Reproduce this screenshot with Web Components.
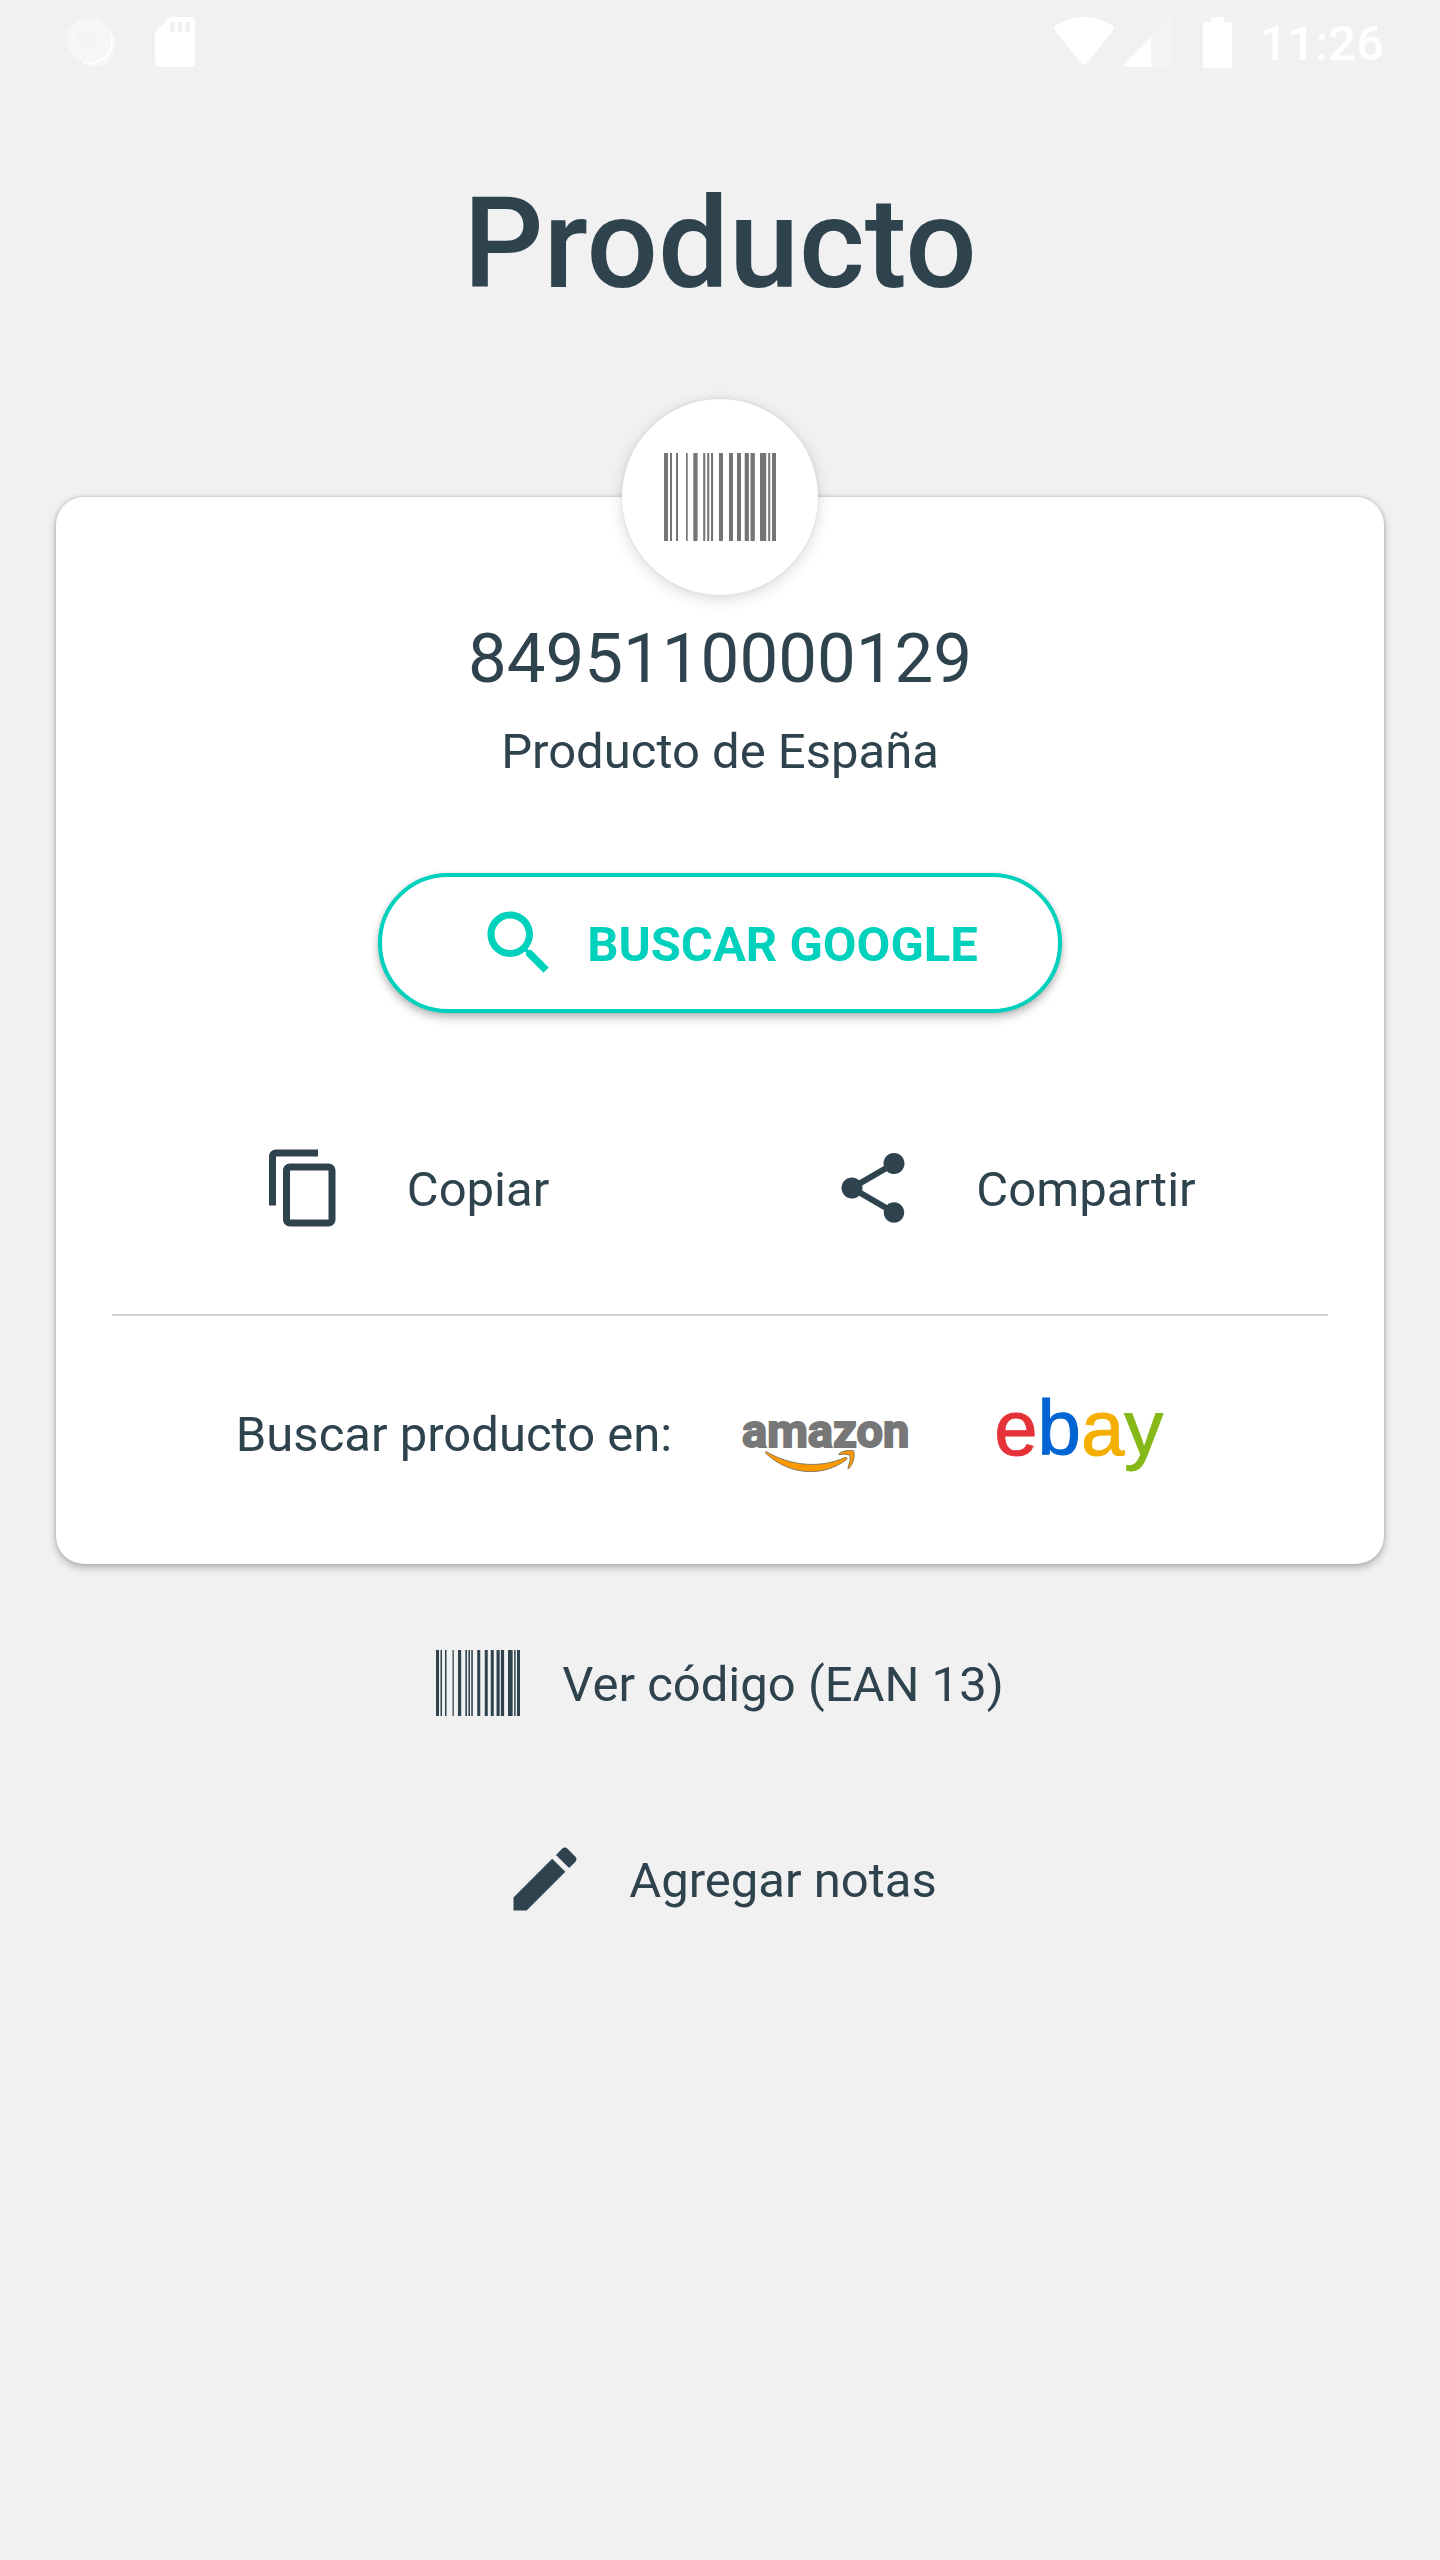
<!DOCTYPE html>
<html lang="es">
<head>
<meta charset="utf-8">
<meta name="viewport" content="width=device-width, initial-scale=1">
<title>Producto</title>
<style>
  html { background: #f1f1f1; }
  body {
    margin: 0;
    min-height: 100vh;
    --ink: #2f434e;
    --accent: #00d1bc;
    --icon: 84px;
    color: var(--ink);
    font: 400 49px/58px Roboto, "Noto Sans", sans-serif;
  }
</style>
</head>
<body>
<product-screen></product-screen>

<script>
const define = (name, html) => customElements.define(name, class extends HTMLElement {
  constructor() {
    super();
    this.attachShadow({ mode: "open" }).innerHTML = html;
  }
});

/* Android status bar: notifications on the left, system state on the right */
define("status-bar", `
<style>
  :host { display: flex; align-items: center; justify-content: space-between; height: 84px; padding: 0 56px 0 66px; color: #fff; }
  div { display: flex; align-items: center; }
  .left { gap: 39px; }
  svg { display: block; fill: #fff; }
  .signal { margin-left: 10px; }
  .battery { margin-left: 32px; }
  time { margin-left: 28px; padding-top: 4px; font-weight: 500; }
</style>
<div class="left">
  <svg width="50" height="50" viewBox="0 0 50 50" aria-hidden="true">
    <circle cx="28" cy="28" r="22" fill="#f7f7f7"/>
    <circle cx="25" cy="25" r="22"/>
    <circle cx="22.500" cy="22.500" r="22.500" fill="#f5f5f5"/>
    <circle cx="22.500" cy="22.500" r="17.500" fill="none" stroke="#f9f9f9" stroke-width="6" stroke-dasharray="2.500 3"/>
  </svg>
  <svg width="40" height="50" viewBox="0 0 40 50" aria-hidden="true">
    <path fill-rule="evenodd" d="M15 0H35.500A4.500 4.500 0 0 1 40 4.500V45.500A4.500 4.500 0 0 1 35.500 50H4.500A4.500 4.500 0 0 1 0 45.500V15ZM15 5V15H20V5ZM22.500 5V15H27.500V5ZM30 5V15H35V5Z"/>
  </svg>
</div>
<div>
  <svg width="60" height="50" viewBox="0 0 60 50" aria-hidden="true">
    <path d="M1.300 9.200C18 -3 42 -3 58.700 9.200Q60.800 11 59.300 13.500L32.500 46.500Q30 49.500 27.500 46.500L.700 13.500Q-.800 11 1.300 9.200Z"/>
  </svg>
  <svg class="signal" width="47" height="50" viewBox="0 0 47 50" aria-hidden="true">
    <path fill="#f5f5f5" d="M27 20.500 43.500 4Q47 1 47 5V47Q47 50 44 50H27Z"/>
    <path d="M27 20V50H3Q-1 49.500 .800 46.200Z"/>
  </svg>
  <svg class="battery" width="29" height="51" viewBox="0 0 29 51" aria-hidden="true">
    <path d="M8 0H21V5H27Q29 5 29 7V49Q29 51 27 51H2Q0 51 0 49V7Q0 5 2 5H8Z"/>
  </svg>
  <time>11:26</time>
</div>`);

/* Barcode glyph, coloured by currentColor */
define("bar-code", `
<style>
  :host { display: block; flex: none; width: var(--icon); }
  svg { display: block; width: 100%; height: auto; fill: currentColor; }
</style>
<svg viewBox="0 0 112 88" aria-hidden="true">
  <path d="M0 0h4v88H0zM6 0h2v88H6zM12 0h2v88h-2zM22 0h1.700v88H22zM29.300 0h4.300v88h-4.300zM39.200 0h2.100v88h-2.100zM43.200 0h2.100v88h-2.100zM47 0h2.100v88H47zM55 0h4v88h-4zM65 0h4v88h-4zM73 0h4v88h-4zM80.700 0h4.200v88h-4.200zM86.500 0h4.300v88h-4.300zM96 0h6.200v88H96zM104.200 0h2v88h-2zM108 0h4v88h-4z"/>
</svg>`);

/* Material icon: the path is chosen by the name attribute */
const ICONS = {
  search: "M15.500 14h-.79l-.28-.27C15.410 12.590 16 11.110 16 9.500 16 5.910 13.090 3 9.500 3S3 5.910 3 9.500 5.910 16 9.500 16c1.610 0 3.090-.59 4.230-1.570l.27.28v.79l5 4.990L20.490 19l-4.990-5zm-6 0C7.010 14 5 11.990 5 9.500S7.010 5 9.500 5 14 7.010 14 9.500 11.990 14 9.500 14z",
  copy: "M16 1H4c-1.100 0-2 .9-2 2v14h2V3h12V1zm3 4H8c-1.100 0-2 .9-2 2v14c0 1.100.9 2 2 2h11c1.100 0 2-.9 2-2V7c0-1.100-.9-2-2-2zm0 16H8V7h11v14z",
  share: "M18 16.080c-.76 0-1.440.3-1.960.77L8.910 12.700c.05-.23.09-.46.09-.7s-.04-.47-.09-.7l7.050-4.110c.54.5 1.250.81 2.040.81 1.660 0 3-1.340 3-3s-1.340-3-3-3-3 1.340-3 3c0 .24.040.47.090.7L8.040 9.810C7.500 9.310 6.790 9 6 9c-1.660 0-3 1.340-3 3s1.340 3 3 3c.79 0 1.500-.31 2.040-.81l7.120 4.160c-.05.21-.08.43-.08.65 0 1.610 1.310 2.920 2.920 2.920s2.920-1.310 2.920-2.920-1.310-2.920-2.920-2.920z",
  edit: "M3 17.250V21h3.750L17.810 9.940l-3.750-3.750L3 17.250zM20.710 7.040c.39-.39.39-1.020 0-1.410l-2.340-2.340c-.39-.39-1.020-.39-1.410 0l-1.830 1.830 3.750 3.750 1.830-1.830z"
};
customElements.define("md-icon", class extends HTMLElement {
  constructor() {
    super();
    this.attachShadow({ mode: "open" });
  }
  connectedCallback() {
    this.shadowRoot.innerHTML = `
<style>
  :host { display: block; flex: none; width: var(--icon); height: var(--icon); }
  svg { display: block; width: 100%; height: 100%; fill: currentColor; }
</style>
<svg viewBox="0 0 24 24" aria-hidden="true"><path d="${ICONS[this.getAttribute("name")]}"/></svg>`;
  }
});

/* Flat button with a leading icon */
define("icon-action", `
<style>
  :host { display: block; --gap: 42px; }
  button { display: flex; align-items: center; gap: var(--gap); min-height: 88px; margin: 0; padding: 0; border: 0; background: none; color: inherit; font: inherit; cursor: pointer; }
  ::slotted([slot=icon]) { margin-bottom: 4px; }
</style>
<button type="button"><slot name="icon"></slot><span><slot></slot></span></button>`);

/* Outlined pill button */
define("pill-button", `
<style>
  :host { display: block; }
  button { display: flex; align-items: center; gap: 26px; box-sizing: border-box; height: 140px; margin: 0; padding: 4px 80px 0 95px; border: 4px solid var(--accent); border-radius: 70px; background: #fff; color: var(--accent); font: inherit; font-weight: 700; box-shadow: 0 5px 8px rgba(0,0,0,.25), 0 0 4px rgba(0,0,0,.1); cursor: pointer; }
  ::slotted([slot=icon]) { margin-bottom: 4px; }
</style>
<button type="button"><slot name="icon"></slot><span><slot></slot></span></button>`);

define("amazon-link", `
<style>
  :host { display: block; }
  svg { display: block; width: 168px; height: 72px; overflow: visible; }
  text { font: 700 47px Roboto, sans-serif; fill: #777; stroke: #777; stroke-width: 2px; }
</style>
<a href="#amazon" aria-label="amazon">
<svg viewBox="0 -17 168 72">
  <text x="0" y="31">amazon</text>
  <g fill="#ff9900" stroke="#8a7a5c" stroke-width="1">
    <path d="M24 35.500C50 51 80 52 103 41.500Q106 41 104.500 43.500C82 61 48 60 24 37.500Q23 36 24 35.500Z"/>
    <path d="M96.500 38Q102 33.500 111.500 34.800C113.500 40 111 48 107 52.500Q105.500 53 106 51.500Q109 44 108 39Q103 37.500 97 38.700Z"/>
  </g>
</svg></a>`);

define("ebay-link", `
<style>
  :host { display: block; }
  a { display: block; width: 168px; padding-bottom: 14px; font: 400 78px/74px "Liberation Sans", Arial, sans-serif; text-decoration: none; white-space: nowrap; }
  span { -webkit-text-stroke: 1px currentColor; }
  .e { color: #e53238; } .b { color: #0064d2; } .a { color: #f5af02; } .y { color: #86b817; }
</style>
<a href="#ebay"><span class="e">e</span><span class="b">b</span><span class="a">a</span><span class="y">y</span></a>`);

define("product-card", `
<style>
  :host { position: relative; display: flex; flex-direction: column; align-items: center; margin: 0 56px; padding: 121px 56px 85px; border-radius: 28px; background: #fff; box-shadow: 0 4px 8px rgba(0,0,0,.24), 0 0 4px rgba(0,0,0,.18); }
  .badge { position: absolute; top: -98px; left: 50%; margin-left: -98px; display: grid; place-items: center; width: 196px; height: 196px; border-radius: 50%; background: #fff; color: #757575; box-shadow: 0 4px 16px rgba(0,0,0,.14), 0 0 4px rgba(0,0,0,.08); --icon: 112px; }
  h2 { margin: 0; font: inherit; font-size: 69px; line-height: 82px; }
  p { margin: 23px 0 92px; }
  .actions { display: grid; grid-template-columns: 1fr 1fr; justify-items: center; align-self: stretch; margin: 133px 0 80px; }
  .actions icon-action { --gap: 61px; padding-right: 21px; }
  hr { align-self: stretch; height: 2px; margin: 0; border: 0; background: #cfcfcf; }
  .stores { display: flex; align-items: center; gap: 84px; margin-top: 75px; padding-right: 42px; }
  .label { margin-right: -14px; }
</style>
<div class="badge"><bar-code></bar-code></div>
<h2>8495110000129</h2>
<p>Producto de España</p>
<pill-button><md-icon slot="icon" name="search"></md-icon>BUSCAR GOOGLE</pill-button>
<div class="actions">
  <icon-action><md-icon slot="icon" name="copy"></md-icon>Copiar</icon-action>
  <icon-action><md-icon slot="icon" name="share"></md-icon>Compartir</icon-action>
</div>
<hr>
<div class="stores">
  <span class="label">Buscar producto en:</span>
  <amazon-link></amazon-link>
  <ebay-link></ebay-link>
</div>`);

define("product-screen", `
<style>
  :host { display: block; }
  h1 { margin: 86px 0 179px; font-size: 126px; line-height: 148px; font-weight: 500; text-align: center; }
  .more { display: flex; flex-direction: column; align-items: center; gap: 108px; margin-top: 77px; }
</style>
<status-bar></status-bar>
<main>
  <h1>Producto</h1>
  <product-card></product-card>
  <div class="more">
    <icon-action><bar-code slot="icon"></bar-code>Ver código (EAN 13)</icon-action>
    <icon-action><md-icon slot="icon" name="edit"></md-icon>Agregar notas</icon-action>
  </div>
</main>`);
</script>
</body>
</html>
